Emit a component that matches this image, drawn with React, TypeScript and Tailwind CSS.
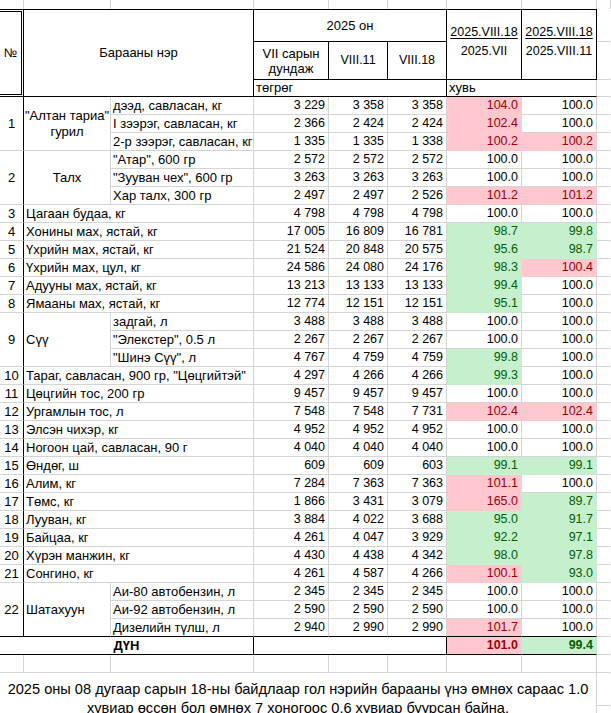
import React, { Fragment } from "react";

type Tone = "" | "p" | "g";
type Line = [string, string, string, string, string, string, Tone, Tone];

type Item = { no: string; name: string; center?: boolean; lines: Line[] };

const items: Item[] = [
  {
    no: "1",
    name: "\"Алтан тариа\" гурил",
    center: true,
    lines: [
      ["дээд, савласан, кг", "3 229", "3 358", "3 358", "104.0", "100.0", "p", ""],
      ["I зээрэг, савласан, кг", "2 366", "2 424", "2 424", "102.4", "100.0", "p", ""],
      ["2-р зээрэг, савласан, кг", "1 335", "1 335", "1 338", "100.2", "100.2", "p", "p"],
    ],
  },
  {
    no: "2",
    name: "Талх",
    center: true,
    lines: [
      ["\"Атар\", 600 гр", "2 572", "2 572", "2 572", "100.0", "100.0", "", ""],
      ["\"Зууван чех\", 600 гр", "3 263", "3 263", "3 263", "100.0", "100.0", "", ""],
      ["Хар талх, 300 гр", "2 497", "2 497", "2 526", "101.2", "101.2", "p", "p"],
    ],
  },
  { no: "3", name: "", lines: [["Цагаан будаа, кг", "4 798", "4 798", "4 798", "100.0", "100.0", "", ""]] },
  { no: "4", name: "", lines: [["Хонины мах, ястай, кг", "17 005", "16 809", "16 781", "98.7", "99.8", "g", "g"]] },
  { no: "5", name: "", lines: [["Үхрийн мах, ястай, кг", "21 524", "20 848", "20 575", "95.6", "98.7", "g", "g"]] },
  { no: "6", name: "", lines: [["Үхрийн мах, цул, кг", "24 586", "24 080", "24 176", "98.3", "100.4", "g", "p"]] },
  { no: "7", name: "", lines: [["Адууны мах, ястай, кг", "13 213", "13 133", "13 133", "99.4", "100.0", "g", ""]] },
  { no: "8", name: "", lines: [["Ямааны мах, ястай, кг", "12 774", "12 151", "12 151", "95.1", "100.0", "g", ""]] },
  {
    no: "9",
    name: "Сүү",
    lines: [
      ["задгай, л", "3 488", "3 488", "3 488", "100.0", "100.0", "", ""],
      ["\"Элекстер\", 0.5 л", "2 267", "2 267", "2 267", "100.0", "100.0", "", ""],
      ["\"Шинэ Сүү\", л", "4 767", "4 759", "4 759", "99.8", "100.0", "g", ""],
    ],
  },
  { no: "10", name: "", lines: [["Тараг, савласан, 900 гр, \"Цөцгийтэй\"", "4 297", "4 266", "4 266", "99.3", "100.0", "g", ""]] },
  { no: "11", name: "", lines: [["Цөцгийн тос, 200 гр", "9 457", "9 457", "9 457", "100.0", "100.0", "", ""]] },
  { no: "12", name: "", lines: [["Ургамлын тос, л", "7 548", "7 548", "7 731", "102.4", "102.4", "p", "p"]] },
  { no: "13", name: "", lines: [["Элсэн чихэр, кг", "4 952", "4 952", "4 952", "100.0", "100.0", "", ""]] },
  { no: "14", name: "", lines: [["Ногоон цай, савласан, 90 г", "4 040", "4 040", "4 040", "100.0", "100.0", "", ""]] },
  { no: "15", name: "", lines: [["Өндөг, ш", "609", "609", "603", "99.1", "99.1", "g", "g"]] },
  { no: "16", name: "", lines: [["Алим, кг", "7 284", "7 363", "7 363", "101.1", "100.0", "p", ""]] },
  { no: "17", name: "", lines: [["Төмс, кг", "1 866", "3 431", "3 079", "165.0", "89.7", "p", "g"]] },
  { no: "18", name: "", lines: [["Лууван, кг", "3 884", "4 022", "3 688", "95.0", "91.7", "g", "g"]] },
  { no: "19", name: "", lines: [["Байцаа, кг", "4 261", "4 047", "3 929", "92.2", "97.1", "g", "g"]] },
  { no: "20", name: "", lines: [["Хүрэн манжин, кг", "4 430", "4 438", "4 342", "98.0", "97.8", "g", "g"]] },
  { no: "21", name: "", lines: [["Сонгино, кг", "4 261", "4 587", "4 266", "100.1", "93.0", "p", "g"]] },
  {
    no: "22",
    name: "Шатахуун",
    lines: [
      ["Аи-80 автобензин, л", "2 345", "2 345", "2 345", "100.0", "100.0", "", ""],
      ["Аи-92 автобензин, л", "2 590", "2 590", "2 590", "100.0", "100.0", "", ""],
      ["Дизелийн түлш, л", "2 940", "2 990", "2 990", "101.7", "100.0", "p", ""],
    ],
  },
];

const GR = "border-r-[#d4d4d4]";
const GB = "border-b-[#d4d4d4]";
const KR = "border-r-black";
const KB = "border-b-black";

const tone = {
  "": { bg: "", r: GR, b: GB },
  p: { bg: "bg-[#ffc7ce] text-[#9c0006]", r: "border-r-[#ffc7ce]", b: "border-b-[#ffc7ce]" },
  g: { bg: "bg-[#c6efce] text-[#006100]", r: "border-r-[#c6efce]", b: "border-b-[#c6efce]" },
};

function Cell({
  r = GR,
  b = GB,
  className = "",
  children,
}: {
  r?: string;
  b?: string;
  className?: string;
  children?: React.ReactNode;
}) {
  return <div className={`border-r border-b ${r} ${b} ${className}`}>{children}</div>;
}

function Values({ l, last }: { l: Line; last: boolean }) {
  const g = tone[l[6]];
  const h = tone[l[7]];
  const bottom = last ? KB : GB;
  return (
    <>
      <Cell b={bottom} className="text-right pr-[3px] leading-[17px]">{l[1]}</Cell>
      <Cell b={bottom} className="text-right pr-[3px] leading-[17px]">{l[2]}</Cell>
      <Cell b={bottom} className="text-right pr-[3px] leading-[17px]">{l[3]}</Cell>
      <Cell r={g.r} b={last ? KB : g.b} className={`text-right pr-[3px] leading-[17px] ${g.bg}`}>{l[4]}</Cell>
      <Cell r={h.r} b={last ? KB : h.b} className={`text-right pr-[3px] leading-[17px] ${h.bg}`}>{l[5]}</Cell>
      <Cell r="border-r-transparent" />
    </>
  );
}

export default function App() {
  return (
    <div className="w-[611px] h-[713px] overflow-hidden bg-white text-black font-['Liberation_Sans',Arial,sans-serif] text-[12.5px]">
      <div className="grid grid-cols-[24px_87px_143px_75px_59px_59px_75px_75px_14px] grid-rows-[9px_33px_38px_17px_repeat(32,18px)_33px_40px]">
        {/* top partial row */}
        {Array.from({ length: 9 }).map((_, i) => (
          <div key={i} className="border-r border-[#d4d4d4]" />
        ))}

        {/* header */}
        <div className="row-span-3 border-t-[3px] border-r-[3px] border-b-[3px] border-double border-black flex items-center justify-center">
          №
        </div>
        <Cell r={KR} b={KB} className="col-span-2 row-span-3 border-t border-t-black flex items-center justify-center text-[13px]">
          Барааны нэр
        </Cell>
        <Cell r={KR} b={KB} className="col-span-3 border-t border-t-black flex items-center justify-center text-[13px]">
          2025 он
        </Cell>
        <Cell r={KR} b={KB} className="row-span-2 border-t border-t-black flex flex-col items-center pt-[13px] leading-[19px]">
          <span className="underline underline-offset-2">2025.VIII.18</span>
          <span>2025.VII</span>
        </Cell>
        <Cell r={KR} b={KB} className="row-span-2 border-t border-t-black flex flex-col items-center pt-[13px] leading-[19px]">
          <span className="underline underline-offset-2">2025.VIII.18</span>
          <span>2025.VIII.11</span>
        </Cell>
        <Cell r="border-r-transparent" />

        <Cell r={KR} b={KB} className="flex flex-col items-center justify-center leading-[15px] text-[13px]">
          <span>VII сарын</span>
          <span>дундаж</span>
        </Cell>
        <Cell r={KR} b={KB} className="flex items-center justify-center">VIII.11</Cell>
        <Cell r={KR} b={KB} className="flex items-center justify-center">VIII.18</Cell>
        <Cell r="border-r-transparent" />

        <Cell r={KR} b={KB} className="col-span-3 pl-[2px] leading-[16px] text-[13px]">төгрөг</Cell>
        <Cell b={KB} className="col-span-2 pl-[2px] leading-[16px] text-[13px]">хувь</Cell>
        <Cell r="border-r-transparent" />

        {/* body */}
        {items.map((it, i) => {
          const last = i === items.length - 1;
          if (it.lines.length === 1) {
            const l = it.lines[0];
            return (
              <Fragment key={it.no}>
                <Cell r={KR} className="text-center leading-[17px] text-[13px]">{it.no}</Cell>
                <Cell className="col-span-2 pl-[2px] leading-[17px] whitespace-nowrap text-[13px]">{l[0]}</Cell>
                <Values l={l} last={false} />
              </Fragment>
            );
          }
          return (
            <Fragment key={it.no}>
              <Cell r={KR} b={last ? KB : GB} className="row-span-3 flex items-center justify-center text-[13px]">
                {it.no}
              </Cell>
              <Cell
                b={last ? KB : GB}
                className={`row-span-3 flex items-center leading-[16px] text-[13px] ${it.center ? "justify-center text-center" : "pl-[2px]"}`}
              >
                {it.name}
              </Cell>
              {it.lines.map((l, j) => (
                <Fragment key={j}>
                  <Cell b={last && j === 2 ? KB : GB} className="pl-[2px] leading-[17px] whitespace-nowrap text-[13px]">
                    {l[0]}
                  </Cell>
                  <Values l={l} last={last && j === 2} />
                </Fragment>
              ))}
            </Fragment>
          );
        })}

        {/* total */}
        <Cell r={KR} b={KB} className="col-span-3 text-center font-bold leading-[17px] text-[13px]">ДҮН</Cell>
        <Cell r={KR} b={KB} className="col-span-3" />
        <Cell r="border-r-[#ffc7ce]" b={KB} className="bg-[#ffc7ce] text-[#9c0006] text-right pr-[3px] font-bold leading-[17px]">
          101.0
        </Cell>
        <Cell r="border-r-[#c6efce]" b={KB} className="bg-[#c6efce] text-[#006100] text-right pr-[3px] font-bold leading-[17px]">
          99.4
        </Cell>
        <Cell r="border-r-transparent" />

        {/* empty row */}
        {Array.from({ length: 8 }).map((_, i) => (
          <Cell key={i} />
        ))}
        <Cell r="border-r-transparent" />

        {/* note */}
        <div className="col-span-8 row-span-2 border-r border-[#d4d4d4] text-center text-[14.6px] leading-[19px] pt-[7px]">
          2025 оны 08 дугаар сарын 18-ны байдлаар гол нэрийн барааны үнэ өмнөх сараас 1.0
          <br />
          хувиар өссөн бол өмнөх 7 хоногоос 0.6 хувиар буурсан байна.
        </div>
        <Cell r="border-r-transparent" />
        <div />
      </div>
    </div>
  );
}
